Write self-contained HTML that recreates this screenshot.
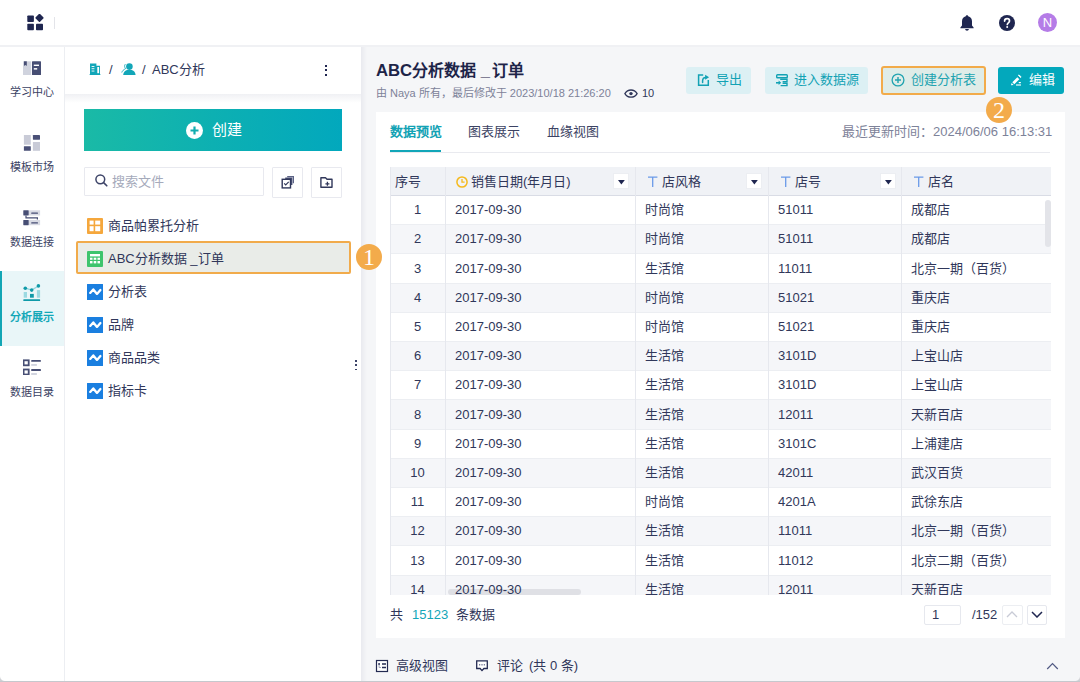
<!DOCTYPE html>
<html lang="zh-CN"><head><meta charset="utf-8">
<style>
*{box-sizing:border-box;margin:0;padding:0}
html,body{width:1080px;height:682px;overflow:hidden}
body{position:relative;background:#fff;font-family:"Liberation Sans",sans-serif;color:#30375a;font-size:13px;line-height:1}
.a{position:absolute}
.t{position:absolute;white-space:nowrap;line-height:16px;z-index:2}
svg{position:absolute;display:block}
/* top bar */
#top{left:0;top:0;width:1080px;height:45px;background:#fff}
#topline{left:0;top:45px;width:1080px;height:2px;background:#f0f1f4;z-index:1}
/* nav */
#nav{left:0;top:46px;width:64px;height:636px;background:#fff}
#navline{left:64px;top:46px;width:1px;height:636px;background:#eceef2}
.nt{position:absolute;left:0;width:64px;text-align:center;font-size:11px;line-height:14px;color:#3b4263;white-space:nowrap}
/* file panel */
#fp{left:65px;top:46px;width:296px;height:636px;background:#fff}
#fph{left:65px;top:46px;width:296px;height:48px;background:#fff}
#fphs{left:65px;top:94px;width:296px;height:9px;background:linear-gradient(to bottom,#f0f1f4,rgba(255,255,255,0))}
/* main */
#main{left:361px;top:46px;width:719px;height:636px;background:#f5f6f8}
#mainsh{left:361px;top:46px;width:6px;height:636px;background:linear-gradient(to right,#e9eaef,#f5f6f8)}
</style></head><body>
<div class="a" id="top"></div>
<div class="a" id="topline"></div>
<div class="a" id="nav"></div>
<div class="a" id="navline"></div>
<div class="a" id="fp"></div>
<div class="a" id="main"></div>
<div class="a" id="mainsh"></div>
<div class="a" id="fph"></div>
<div class="a" id="fphs"></div>

<!-- TOP BAR -->
<svg style="left:27px;top:14px" width="17" height="17" viewBox="0 0 17 17">
<rect x="0.3" y="1.5" width="6.6" height="6.6" rx="0.8" fill="#1f2650"/>
<rect x="9" y="9.8" width="7" height="6.4" rx="0.8" fill="#1f2650"/>
<rect x="0.3" y="9.8" width="6.6" height="6.4" rx="0.8" fill="#1f2650"/>
<rect x="9.4" y="0.8" width="6.2" height="6.2" rx="0.8" fill="#1f2650" transform="rotate(45 12.5 3.9)"/>
</svg>
<div class="a" style="left:54px;top:17px;width:1px;height:12px;background:#e3e4e9"></div>
<svg style="left:959px;top:14px" width="16" height="17" viewBox="0 0 16 17">
<path d="M8 1.2c.7 0 1.2.5 1.2 1.1 2.4.5 3.8 2.5 3.8 5v4.3l1.6 1.8v.9H1.4v-.9L3 11.6V7.3c0-2.5 1.4-4.5 3.8-5C6.8 1.7 7.3 1.2 8 1.2z" fill="#1f2650"/>
<path d="M6.2 15h3.6c0 1-.8 1.7-1.8 1.7S6.2 16 6.2 15z" fill="#1f2650"/>
</svg>
<svg style="left:999px;top:15px" width="16" height="16" viewBox="0 0 16 16">
<circle cx="8" cy="8" r="8" fill="#1f2650"/>
<path d="M5.6 6.1c0-1.5 1.1-2.4 2.5-2.4s2.4.9 2.4 2.2c0 1.9-2.2 1.9-2.2 3.6" stroke="#fff" stroke-width="1.7" fill="none" stroke-linecap="round"/>
<circle cx="8.2" cy="12.1" r="1" fill="#fff"/>
</svg>
<div class="a" style="left:1038px;top:13px;width:19px;height:19px;border-radius:50%;background:#b57ce7;color:#fff;font-size:13px;line-height:19px;text-align:center">N</div>

<!-- NAV -->
<svg style="left:23px;top:61px" width="18" height="14" viewBox="0 0 18 14">
<rect x="0" y="0.3" width="8.2" height="13.7" fill="#d0d3de"/>
<rect x="1" y="0.3" width="2.8" height="4.6" fill="#474e74"/>
<path d="M1 4.9l1.4-1 1.4 1z" fill="#d0d3de"/>
<rect x="9" y="0.3" width="9" height="13.7" rx="0.6" fill="#464d73"/>
<rect x="10.8" y="3.6" width="5.2" height="1.4" fill="#fff"/>
<rect x="10.8" y="7.1" width="3.4" height="1.5" fill="#fff"/>
</svg>
<div class="nt" style="top:85px">学习中心</div>
<svg style="left:23px;top:134px" width="18" height="18" viewBox="0 0 18 18">
<rect x="0.9" y="1" width="6.9" height="9.7" fill="#c9cbd7"/>
<rect x="9.9" y="1" width="7.1" height="4.7" rx="0.4" fill="#4a5077"/>
<rect x="0.9" y="12.2" width="6.9" height="4.6" rx="0.4" fill="#4a5077"/>
<rect x="9.9" y="8" width="7.1" height="8.8" fill="#c9cbd7"/>
</svg>
<div class="nt" style="top:160px">模板市场</div>
<svg style="left:23px;top:209px" width="18" height="18" viewBox="0 0 18 18">
<rect x="5.7" y="1.3" width="11.4" height="5.2" fill="#d9dbe4"/>
<rect x="5.7" y="11" width="11.4" height="5.2" fill="#d9dbe4"/>
<rect x="0.3" y="1.3" width="5.4" height="5.2" rx="0.4" fill="#474e74"/>
<rect x="0.3" y="11" width="5.4" height="5.2" rx="0.4" fill="#474e74"/>
<rect x="8.2" y="3.4" width="6.8" height="1.4" rx="0.5" fill="#474e74"/>
<rect x="8.2" y="13.2" width="6.8" height="1.2" rx="0.5" fill="#474e74"/>
<path d="M3 6.5v2.3h11.4v1.7" stroke="#474e74" stroke-width="1.2" fill="none"/>
</svg>
<div class="nt" style="top:235px">数据连接</div>
<div class="a" style="left:0;top:271px;width:64px;height:75px;background:#e9f6f8"></div>
<div class="a" style="left:0;top:271px;width:2px;height:75px;background:#12a6b5"></div>
<svg style="left:23px;top:284px" width="18" height="18" viewBox="0 0 18 18">
<path d="M2.3 4.2L8.7 6.1 15.4 1.9" stroke="#8fd5de" stroke-width="1.2" fill="none"/>
<circle cx="2.3" cy="4.2" r="1.8" fill="#0f9aa8"/>
<circle cx="8.7" cy="6.1" r="1.8" fill="#0f9aa8"/>
<circle cx="15.4" cy="1.9" r="1.8" fill="#0f9aa8"/>
<rect x="0.7" y="8" width="3.3" height="5.7" fill="#9bdae2"/>
<rect x="7" y="9.9" width="3.8" height="3.8" fill="#0f9aa8"/>
<rect x="13.9" y="6.1" width="3.2" height="7.6" fill="#9bdae2"/>
<rect x="0.3" y="15.3" width="16.8" height="1.7" rx="0.5" fill="#0f9aa8"/>
</svg>
<div class="nt" style="top:309.5px;color:#13a8b8;font-weight:bold">分析展示</div>
<svg style="left:23px;top:359px" width="18" height="16" viewBox="0 0 18 16">
<rect x="0.6" y="1.3" width="5.1" height="5" fill="none" stroke="#474e74" stroke-width="1.8"/>
<rect x="0.6" y="10.5" width="5.1" height="5" fill="none" stroke="#474e74" stroke-width="1.8"/>
<rect x="8.2" y="0.9" width="9.7" height="1.9" rx="0.6" fill="#474e74"/>
<rect x="8.2" y="5.1" width="5.7" height="1.7" fill="#cdd0dc"/>
<rect x="8.2" y="10" width="9.7" height="2" rx="0.6" fill="#474e74"/>
<rect x="8.2" y="14.1" width="5.7" height="1.8" fill="#cdd0dc"/>
</svg>
<div class="nt" style="top:384.5px">数据目录</div>

<!-- FILE PANEL -->
<svg style="left:89px;top:63px" width="12" height="12" viewBox="0 0 12 12">
<path d="M0.3 11.4h11.4v0.6H0.3z M1 0.6h6.4v10.8H1z M7.4 2.8h3.6v8.6H7.4z" fill="#12a6b8"/>
<rect x="2.6" y="3" width="2.8" height="0.9" fill="#fff"/>
<rect x="2.6" y="5.3" width="2.8" height="0.9" fill="#fff"/>
<rect x="2.6" y="7.6" width="2.8" height="0.9" fill="#fff"/>
<rect x="8.3" y="4" width="1.8" height="6.2" fill="#fff"/>
</svg>
<div class="t" style="left:109px;top:62px;font-size:13px;color:#30375a">/</div>
<svg style="left:121px;top:63px" width="15" height="12" viewBox="0 0 15 12">
<circle cx="8.4" cy="3.6" r="3.3" fill="#12a6b8"/>
<path d="M2.2 12c.3-3.6 2.7-5.3 6.2-5.3s5.9 1.7 6.2 5.3z" fill="#12a6b8"/>
<path d="M4.3 1.2C3.2 2.6 3.5 4.3 4.6 5.6 2.6 6.6 1.2 8 0.8 9.5" stroke="#12a6b8" stroke-width="0.9" fill="none"/>
</svg>
<div class="t" style="left:142px;top:62px;font-size:13px;color:#30375a">/</div><div class="t" style="left:152px;top:62px;font-size:13px;color:#30375a">ABC分析</div>
<div class="a" style="left:325px;top:64.5px;width:2px;height:2px;background:#1f2650"></div>
<div class="a" style="left:325px;top:69px;width:2px;height:2px;background:#1f2650"></div>
<div class="a" style="left:325px;top:73.8px;width:2px;height:2px;background:#1f2650"></div>

<div class="a" style="left:84px;top:109px;width:258px;height:42px;background:linear-gradient(90deg,#1abaa6 0%,#0db0b2 50%,#02a8bd 100%)"></div>
<svg style="left:186px;top:122px" width="17" height="17" viewBox="0 0 17 17">
<circle cx="8.5" cy="8.5" r="8.5" fill="#fff"/>
<path d="M8.5 4.5v8M4.5 8.5h8" stroke="#12adb0" stroke-width="2.2"/>
</svg>
<div class="t" style="left:212px;top:122px;font-size:15px;color:#fff;font-weight:500">创建</div>

<div class="a" style="left:84px;top:167px;width:180px;height:29px;border:1px solid #e8e9ef;border-radius:1px;background:#fff"></div>
<svg style="left:95px;top:174px" width="13" height="13" viewBox="0 0 13 13">
<circle cx="5.3" cy="5.3" r="4.4" stroke="#3d4468" stroke-width="1.5" fill="none"/>
<path d="M8.6 8.6l3.2 3.2" stroke="#3d4468" stroke-width="1.6" stroke-linecap="round"/>
</svg>
<div class="t" style="left:112px;top:174px;font-size:13px;color:#a5aabb">搜索文件</div>
<div class="a" style="left:272px;top:167px;width:31px;height:31px;border:1px solid #e8e9ef;border-radius:1px;background:#fff"></div>
<svg style="left:280px;top:175px" width="15" height="14" viewBox="0 0 15 14">
<path d="M7.2 1.7h6.2v6.6" stroke="#5b6285" stroke-width="1.2" fill="none"/>
<path d="M5.2 3.3h6.5v6.8" stroke="#474e74" stroke-width="1.4" fill="none"/>
<rect x="2.2" y="4.3" width="8.3" height="8.6" stroke="#30375a" stroke-width="1.4" fill="#fff"/>
<path d="M4.2 8.4l1.5 1.5 3-3" stroke="#30375a" stroke-width="1.2" fill="none"/>
</svg>
<div class="a" style="left:311px;top:167px;width:31px;height:31px;border:1px solid #e8e9ef;border-radius:1px;background:#fff"></div>
<svg style="left:320px;top:177px" width="13" height="11" viewBox="0 0 13 11">
<path d="M0.9 0.8h4.6l1.5 1.5h5v7.9H0.9z" stroke="#30375a" stroke-width="1.4" fill="none" stroke-linejoin="round"/>
<path d="M7.4 4.8v4M5.4 6.8h4" stroke="#30375a" stroke-width="1.3"/>
</svg>

<!-- FILE LIST -->
<svg style="left:87px;top:218px" width="16" height="16" viewBox="0 0 16 16">
<rect x="0" y="0" width="16" height="16" rx="1" fill="#f5a73c"/>
<rect x="2.6" y="2.6" width="4" height="4" fill="#fff"/>
<rect x="8.2" y="2.6" width="5" height="4" fill="#fff"/>
<rect x="2.6" y="8.2" width="4" height="5" fill="#fff"/>
<rect x="8.2" y="8.2" width="5" height="5" fill="#fff"/>
</svg>
<div class="t" style="left:108px;top:218px;font-size:13px;color:#30375a">商品帕累托分析</div>

<div class="a" style="left:76px;top:241px;width:275px;height:33px;border:2px solid #f1ab4b;border-radius:2px;background:#e9ece8"></div>
<svg style="left:87px;top:251px" width="16" height="16" viewBox="0 0 16 16">
<rect x="0" y="0" width="16" height="16" rx="1" fill="#3ec46d"/>
<rect x="3" y="3" width="10" height="2.4" fill="#fff"/>
<rect x="3" y="6.7" width="2.5" height="2.1" fill="#fff"/>
<rect x="6.7" y="6.7" width="2.6" height="2.1" fill="#fff"/>
<rect x="10.5" y="6.7" width="2.5" height="2.1" fill="#fff"/>
<rect x="3" y="10" width="2.5" height="2.4" fill="#fff"/>
<rect x="6.7" y="10" width="2.6" height="2.4" fill="#fff"/>
<rect x="10.5" y="10" width="2.5" height="2.4" fill="#fff"/>
</svg>
<div class="t" style="left:108px;top:251px;font-size:13px;color:#30375a">ABC分析数据 _订单</div>
<svg style="left:87px;top:284px" width="16" height="16" viewBox="0 0 16 16">
<rect x="0" y="0" width="16" height="16" rx="0.3" fill="#1a7fe0"/>
<path d="M3.2 8.9L6.3 5.4 10 9.9 13.4 6" stroke="#fff" stroke-width="2.3" fill="none" stroke-linejoin="round" stroke-linecap="round"/>
</svg>
<div class="t" style="left:108px;top:284px;font-size:13px;color:#30375a">分析表</div>
<svg style="left:87px;top:317px" width="16" height="16" viewBox="0 0 16 16">
<rect x="0" y="0" width="16" height="16" rx="0.3" fill="#1a7fe0"/>
<path d="M3.2 8.9L6.3 5.4 10 9.9 13.4 6" stroke="#fff" stroke-width="2.3" fill="none" stroke-linejoin="round" stroke-linecap="round"/>
</svg>
<div class="t" style="left:108px;top:317px;font-size:13px;color:#30375a">品牌</div>
<svg style="left:87px;top:350px" width="16" height="16" viewBox="0 0 16 16">
<rect x="0" y="0" width="16" height="16" rx="0.3" fill="#1a7fe0"/>
<path d="M3.2 8.9L6.3 5.4 10 9.9 13.4 6" stroke="#fff" stroke-width="2.3" fill="none" stroke-linejoin="round" stroke-linecap="round"/>
</svg>
<div class="t" style="left:108px;top:350px;font-size:13px;color:#30375a">商品品类</div>
<svg style="left:87px;top:383px" width="16" height="16" viewBox="0 0 16 16">
<rect x="0" y="0" width="16" height="16" rx="0.3" fill="#1a7fe0"/>
<path d="M3.2 8.9L6.3 5.4 10 9.9 13.4 6" stroke="#fff" stroke-width="2.3" fill="none" stroke-linejoin="round" stroke-linecap="round"/>
</svg>
<div class="t" style="left:108px;top:383px;font-size:13px;color:#30375a">指标卡</div>

<div class="a" style="left:355px;top:360px;width:1.6px;height:1.6px;background:#3d4468"></div>
<div class="a" style="left:355px;top:364.4px;width:1.6px;height:1.6px;background:#3d4468"></div>
<div class="a" style="left:355px;top:368.8px;width:1.6px;height:1.6px;background:#3d4468"></div>
<div class="a" style="left:356px;top:244px;width:26px;height:26px;border-radius:50%;background:#f3ab4b;color:#fff;font-family:'Liberation Serif',serif;font-size:24px;z-index:5;line-height:26px;text-align:center">1</div>

<!-- MAIN HEADER -->
<div class="t" style="left:376px;top:61px;font-size:16.7px;line-height:20px;font-weight:bold;color:#1d2448">ABC<span style="font-size:16px">分析数据</span> _<span style="font-size:16px;margin-left:2px">订单</span></div>
<div class="t" style="left:376px;top:86.5px;font-size:11px;line-height:13px;color:#7d8299">由 Naya 所有，最后修改于 2023/10/18 21:26:20</div>
<svg style="left:624px;top:89px" width="14" height="9" viewBox="0 0 14 9">
<path d="M0.9 4.6C2.4 2.1 4.5 1 7 1s4.6 1.1 6.1 3.6C11.6 7.1 9.5 8.2 7 8.2S2.4 7.1 0.9 4.6z" stroke="#30375a" stroke-width="1.3" fill="none"/>
<circle cx="7" cy="4.6" r="1.7" fill="#30375a"/>
</svg>
<div class="t" style="left:642px;top:87px;font-size:11px;line-height:13px;color:#30375a">10</div>

<div class="a" style="left:686px;top:67px;width:65px;height:27px;border-radius:3px;background:#dcf0f4"></div>
<svg style="left:697px;top:73px" width="13" height="13" viewBox="0 0 13 13">
<path d="M6.2 1.9H1.6v10.3h9.7V7" stroke="#12a2b4" stroke-width="1.5" fill="none"/>
<path d="M5.6 9.5V8c0-2 1.2-3.5 3.2-3.5" stroke="#12a2b4" stroke-width="1.5" fill="none" stroke-linecap="round"/>
<path d="M8.1 1.8l4 2.5-4 2.5z" fill="#12a2b4"/>
</svg>
<div class="t" style="left:716px;top:72px;font-size:13px;color:#12a2b4">导出</div>

<div class="a" style="left:765px;top:67px;width:103px;height:27px;border-radius:3px;background:#dcf0f4"></div>
<svg style="left:775px;top:73px" width="14" height="14" viewBox="0 0 14 14">
<rect x="1.7" y="1.8" width="10.6" height="3" rx="0.8" stroke="#12a2b4" stroke-width="1.4" fill="none"/>
<path d="M5.2 6.3h6.8v2.4H7.6M7.6 10.4h4.4v2.2H5.6" stroke="#12a2b4" stroke-width="1.4" fill="none"/>
<path d="M1 9.8h3.5" stroke="#12a2b4" stroke-width="1.6"/>
<path d="M3.6 7.6l2.6 2.2-2.6 2.2z" fill="#12a2b4"/>
</svg>
<div class="t" style="left:794px;top:72px;font-size:13px;color:#12a2b4">进入数据源</div>

<div class="a" style="left:881px;top:66px;width:105px;height:29px;border:2px solid #f2ab4a;border-radius:3px;background:#dfece8"></div>
<svg style="left:891px;top:73px" width="14" height="14" viewBox="0 0 14 14">
<circle cx="7" cy="7" r="5.9" stroke="#21a3b0" stroke-width="1.3" fill="none"/>
<path d="M7 4v6M4 7h6" stroke="#21a3b0" stroke-width="1.4"/>
</svg>
<div class="t" style="left:911px;top:72px;font-size:13px;color:#21a3b0">创建分析表</div>

<div class="a" style="left:998px;top:67px;width:66px;height:27px;border-radius:3px;background:#03a8bc"></div>
<svg style="left:1010px;top:74px" width="12" height="12" viewBox="0 0 12 12">
<path d="M2.3 8.3L7.3 3.3 9.3 5.3 4.3 10.3z" fill="#fff"/>
<path d="M1 11.3L1.6 9 3.6 11z" fill="#fff"/>
<path d="M8.4 1.4l0.6-0.6 2.2 2.2-0.6 0.6z" fill="#fff" stroke="#fff" stroke-width="0.8"/>
<rect x="8.6" y="8" width="2.4" height="1.2" rx="0.6" fill="#fff"/>
<rect x="6" y="10.3" width="5" height="1.4" fill="#fff" opacity="0.8"/>
</svg>
<div class="t" style="left:1029px;top:72px;font-size:13px;color:#fff;font-weight:500">编辑</div>

<!-- CARD -->
<div class="a" style="left:376px;top:112px;width:689px;height:526px;background:#fff"></div>

<!-- TABS -->
<div class="t" style="left:390px;top:124px;font-size:13px;font-weight:bold;color:#12a2b4">数据预览</div>
<div class="t" style="left:468px;top:124px;font-size:13px;color:#3b4263">图表展示</div>
<div class="t" style="left:547px;top:124px;font-size:13px;color:#3b4263">血缘视图</div>
<div class="a" style="left:390px;top:152px;width:660px;height:1px;background:#e9eaef"></div>
<div class="a" style="left:390px;top:150px;width:51px;height:2px;background:#12a6b8"></div>
<div class="t" style="left:842px;top:124px;font-size:13px;color:#7d8299">最近更新时间：2024/06/06 16:13:31</div>

<!-- TABLE -->
<div class="a" style="left:390px;top:167px;width:661px;height:428px;overflow:hidden">
<div class="a" style="left:0;top:0;width:661px;height:28px;background:#f0f2f6"></div>
<div class="a" style="left:0;top:28px;width:661px;height:1px;background:#d9dce5"></div>
<div class="a" style="left:0;top:29.0px;width:661px;height:29.2px;background:#fff"></div><div class="a" style="left:0;top:57.2px;width:661px;height:1px;background:#eceef2"></div><div class="t" style="left:0;width:55px;text-align:center;top:35.1px">1</div><div class="t" style="left:65px;top:35.1px">2017-09-30</div><div class="t" style="left:255px;top:35.1px">时尚馆</div><div class="t" style="left:388px;top:35.1px">51011</div><div class="t" style="left:521px;top:35.1px">成都店</div>
<div class="a" style="left:0;top:58.2px;width:661px;height:29.2px;background:#f5f6f9"></div><div class="a" style="left:0;top:86.4px;width:661px;height:1px;background:#eceef2"></div><div class="t" style="left:0;width:55px;text-align:center;top:64.3px">2</div><div class="t" style="left:65px;top:64.3px">2017-09-30</div><div class="t" style="left:255px;top:64.3px">时尚馆</div><div class="t" style="left:388px;top:64.3px">51011</div><div class="t" style="left:521px;top:64.3px">成都店</div>
<div class="a" style="left:0;top:87.4px;width:661px;height:29.2px;background:#fff"></div><div class="a" style="left:0;top:115.6px;width:661px;height:1px;background:#eceef2"></div><div class="t" style="left:0;width:55px;text-align:center;top:93.5px">3</div><div class="t" style="left:65px;top:93.5px">2017-09-30</div><div class="t" style="left:255px;top:93.5px">生活馆</div><div class="t" style="left:388px;top:93.5px">11011</div><div class="t" style="left:521px;top:93.5px">北京一期（百货）</div>
<div class="a" style="left:0;top:116.6px;width:661px;height:29.2px;background:#f5f6f9"></div><div class="a" style="left:0;top:144.8px;width:661px;height:1px;background:#eceef2"></div><div class="t" style="left:0;width:55px;text-align:center;top:122.7px">4</div><div class="t" style="left:65px;top:122.7px">2017-09-30</div><div class="t" style="left:255px;top:122.7px">时尚馆</div><div class="t" style="left:388px;top:122.7px">51021</div><div class="t" style="left:521px;top:122.7px">重庆店</div>
<div class="a" style="left:0;top:145.8px;width:661px;height:29.2px;background:#fff"></div><div class="a" style="left:0;top:174.0px;width:661px;height:1px;background:#eceef2"></div><div class="t" style="left:0;width:55px;text-align:center;top:151.9px">5</div><div class="t" style="left:65px;top:151.9px">2017-09-30</div><div class="t" style="left:255px;top:151.9px">时尚馆</div><div class="t" style="left:388px;top:151.9px">51021</div><div class="t" style="left:521px;top:151.9px">重庆店</div>
<div class="a" style="left:0;top:175.0px;width:661px;height:29.2px;background:#f5f6f9"></div><div class="a" style="left:0;top:203.2px;width:661px;height:1px;background:#eceef2"></div><div class="t" style="left:0;width:55px;text-align:center;top:181.1px">6</div><div class="t" style="left:65px;top:181.1px">2017-09-30</div><div class="t" style="left:255px;top:181.1px">生活馆</div><div class="t" style="left:388px;top:181.1px">3101D</div><div class="t" style="left:521px;top:181.1px">上宝山店</div>
<div class="a" style="left:0;top:204.2px;width:661px;height:29.2px;background:#fff"></div><div class="a" style="left:0;top:232.4px;width:661px;height:1px;background:#eceef2"></div><div class="t" style="left:0;width:55px;text-align:center;top:210.3px">7</div><div class="t" style="left:65px;top:210.3px">2017-09-30</div><div class="t" style="left:255px;top:210.3px">生活馆</div><div class="t" style="left:388px;top:210.3px">3101D</div><div class="t" style="left:521px;top:210.3px">上宝山店</div>
<div class="a" style="left:0;top:233.4px;width:661px;height:29.2px;background:#f5f6f9"></div><div class="a" style="left:0;top:261.6px;width:661px;height:1px;background:#eceef2"></div><div class="t" style="left:0;width:55px;text-align:center;top:239.5px">8</div><div class="t" style="left:65px;top:239.5px">2017-09-30</div><div class="t" style="left:255px;top:239.5px">生活馆</div><div class="t" style="left:388px;top:239.5px">12011</div><div class="t" style="left:521px;top:239.5px">天新百店</div>
<div class="a" style="left:0;top:262.6px;width:661px;height:29.2px;background:#fff"></div><div class="a" style="left:0;top:290.8px;width:661px;height:1px;background:#eceef2"></div><div class="t" style="left:0;width:55px;text-align:center;top:268.7px">9</div><div class="t" style="left:65px;top:268.7px">2017-09-30</div><div class="t" style="left:255px;top:268.7px">生活馆</div><div class="t" style="left:388px;top:268.7px">3101C</div><div class="t" style="left:521px;top:268.7px">上浦建店</div>
<div class="a" style="left:0;top:291.8px;width:661px;height:29.2px;background:#f5f6f9"></div><div class="a" style="left:0;top:320.0px;width:661px;height:1px;background:#eceef2"></div><div class="t" style="left:0;width:55px;text-align:center;top:297.9px">10</div><div class="t" style="left:65px;top:297.9px">2017-09-30</div><div class="t" style="left:255px;top:297.9px">生活馆</div><div class="t" style="left:388px;top:297.9px">42011</div><div class="t" style="left:521px;top:297.9px">武汉百货</div>
<div class="a" style="left:0;top:321.0px;width:661px;height:29.2px;background:#fff"></div><div class="a" style="left:0;top:349.2px;width:661px;height:1px;background:#eceef2"></div><div class="t" style="left:0;width:55px;text-align:center;top:327.1px">11</div><div class="t" style="left:65px;top:327.1px">2017-09-30</div><div class="t" style="left:255px;top:327.1px">时尚馆</div><div class="t" style="left:388px;top:327.1px">4201A</div><div class="t" style="left:521px;top:327.1px">武徐东店</div>
<div class="a" style="left:0;top:350.2px;width:661px;height:29.2px;background:#f5f6f9"></div><div class="a" style="left:0;top:378.4px;width:661px;height:1px;background:#eceef2"></div><div class="t" style="left:0;width:55px;text-align:center;top:356.3px">12</div><div class="t" style="left:65px;top:356.3px">2017-09-30</div><div class="t" style="left:255px;top:356.3px">生活馆</div><div class="t" style="left:388px;top:356.3px">11011</div><div class="t" style="left:521px;top:356.3px">北京一期（百货）</div>
<div class="a" style="left:0;top:379.4px;width:661px;height:29.2px;background:#fff"></div><div class="a" style="left:0;top:407.6px;width:661px;height:1px;background:#eceef2"></div><div class="t" style="left:0;width:55px;text-align:center;top:385.5px">13</div><div class="t" style="left:65px;top:385.5px">2017-09-30</div><div class="t" style="left:255px;top:385.5px">生活馆</div><div class="t" style="left:388px;top:385.5px">11012</div><div class="t" style="left:521px;top:385.5px">北京二期（百货）</div>
<div class="a" style="left:0;top:408.6px;width:661px;height:29.2px;background:#f5f6f9"></div><div class="a" style="left:0;top:436.8px;width:661px;height:1px;background:#eceef2"></div><div class="t" style="left:0;width:55px;text-align:center;top:414.7px">14</div><div class="t" style="left:65px;top:414.7px">2017-09-30</div><div class="t" style="left:255px;top:414.7px">生活馆</div><div class="t" style="left:388px;top:414.7px">12011</div><div class="t" style="left:521px;top:414.7px">天新百店</div>
<div class="a" style="left:0px;top:0;width:1px;height:428px;background:#e6e8ee"></div><div class="a" style="left:55px;top:0;width:1px;height:428px;background:#e6e8ee"></div><div class="a" style="left:245px;top:0;width:1px;height:428px;background:#e6e8ee"></div><div class="a" style="left:378px;top:0;width:1px;height:428px;background:#e6e8ee"></div><div class="a" style="left:511px;top:0;width:1px;height:428px;background:#e6e8ee"></div>
<div class="t" style="left:5px;top:6.7px">序号</div>
<svg style="left:66px;top:9px" width="12" height="12" viewBox="0 0 12 12"><circle cx="6" cy="6" r="5.1" stroke="#f5b91c" stroke-width="1.5" fill="none"/><path d="M6 3v3.2h2.6" stroke="#f5b91c" stroke-width="1.3" fill="none"/></svg>
<div class="t" style="left:81px;top:6.7px">销售日期(年月日)</div>
<svg style="left:258px;top:9px" width="10" height="12" viewBox="0 0 10 12"><path d="M0 1.1h9.4M4.7 1.1V11" stroke="#6a9ae8" stroke-width="1.3"/></svg>
<div class="t" style="left:272px;top:6.7px">店风格</div>
<svg style="left:391px;top:9px" width="10" height="12" viewBox="0 0 10 12"><path d="M0 1.1h9.4M4.7 1.1V11" stroke="#6a9ae8" stroke-width="1.3"/></svg>
<div class="t" style="left:405px;top:6.7px">店号</div>
<svg style="left:524px;top:9px" width="10" height="12" viewBox="0 0 10 12"><path d="M0 1.1h9.4M4.7 1.1V11" stroke="#6a9ae8" stroke-width="1.3"/></svg>
<div class="t" style="left:538px;top:6.7px">店名</div>
<div class="a" style="left:223px;top:6px;width:16px;height:16px;background:#fff;border:1px solid #eceef2"><svg style="left:4.2px;top:5.5px" width="7" height="5" viewBox="0 0 7 5"><path d="M0 0h6.8L3.4 4.6z" fill="#1f2650"/></svg></div><div class="a" style="left:356px;top:6px;width:16px;height:16px;background:#fff;border:1px solid #eceef2"><svg style="left:4.2px;top:5.5px" width="7" height="5" viewBox="0 0 7 5"><path d="M0 0h6.8L3.4 4.6z" fill="#1f2650"/></svg></div><div class="a" style="left:490px;top:6px;width:16px;height:16px;background:#fff;border:1px solid #eceef2"><svg style="left:4.2px;top:5.5px" width="7" height="5" viewBox="0 0 7 5"><path d="M0 0h6.8L3.4 4.6z" fill="#1f2650"/></svg></div>
<div class="a" style="left:655px;top:33px;width:6px;height:47px;border-radius:3px;background:#e3e4e9"></div>
<div class="a" style="left:58px;top:422px;width:133px;height:6px;border-radius:3px;background:#dfe0e5"></div>
</div>
<!-- FOOTER -->
<div class="t" style="left:390px;top:607px">共</div>
<div class="t" style="left:412px;top:607px;color:#12a6b8">15123</div>
<div class="t" style="left:456px;top:607px">条数据</div>
<div class="a" style="left:924px;top:605px;width:37px;height:20px;border:1px solid #e6e8ee;border-radius:2px;background:#fff"></div>
<div class="t" style="left:932px;top:607px">1</div>
<div class="t" style="left:972px;top:607px">/152</div>
<div class="a" style="left:1002px;top:605px;width:21px;height:20px;border:1px solid #eceef2;border-radius:2px;background:#fff"></div>
<svg style="left:1006px;top:611px" width="12" height="7" viewBox="0 0 12 7"><path d="M1 6l5-5 5 5" stroke="#c8cbd6" stroke-width="1.3" fill="none"/></svg>
<div class="a" style="left:1027px;top:605px;width:20px;height:20px;border:1px solid #e6e8ee;border-radius:2px;background:#fff"></div>
<svg style="left:1031px;top:611px" width="12" height="7" viewBox="0 0 12 7"><path d="M1 1l5 5 5-5" stroke="#1f2650" stroke-width="1.5" fill="none"/></svg>

<!-- BOTTOM BAR -->
<svg style="left:375px;top:659px" width="14" height="14" viewBox="0 0 14 14">
<rect x="1.5" y="1.5" width="11" height="11" stroke="#232a52" stroke-width="1.2" fill="#fff"/>
<rect x="3.2" y="4.2" width="1.8" height="1.6" fill="#232a52"/>
<path d="M7 5h4M7 8.5h4" stroke="#232a52" stroke-width="1.3"/>
<path d="M4.1 5.8v2.7H6" stroke="#8a8fa8" stroke-width="0.8" fill="none"/>
</svg>
<div class="t" style="left:396px;top:658px">高级视图</div>
<svg style="left:475px;top:659px" width="14" height="14" viewBox="0 0 14 14">
<path d="M1.7 1.9h10.6v7.6H8.9L7 11.6 5.1 9.5H1.7z" stroke="#232a52" stroke-width="1.3" fill="#fff" stroke-linejoin="miter"/>
<path d="M4.2 5.8h1M6.5 5.8h1M8.8 5.8h1" stroke="#5b6285" stroke-width="1.4"/>
</svg>
<div class="t" style="left:497px;top:658px">评论</div><div class="t" style="left:529px;top:658px">(共 0 条)</div>
<svg style="left:1046px;top:662px" width="13" height="8" viewBox="0 0 13 8"><path d="M1.2 7l5.3-5.3L11.8 7" stroke="#4f5882" stroke-width="1.2" fill="none"/></svg>
<div class="a" style="left:0;top:681px;width:1080px;height:1px;background:#c6c8cd;z-index:6"></div>
<div class="a" style="left:0;top:676px;width:5px;height:5px;background:radial-gradient(circle at 100% 0,rgba(0,0,0,0) 4.5px,#cfd1d5 5.5px);z-index:6"></div>
<div class="a" style="left:1075px;top:676px;width:5px;height:5px;background:radial-gradient(circle at 0 0,rgba(0,0,0,0) 4.5px,#cfd1d5 5.5px);z-index:6"></div>

<div class="a" style="left:986px;top:97px;width:26px;height:26px;border-radius:50%;background:#f3ab4b;color:#fff;font-family:'Liberation Serif',serif;font-size:24px;z-index:5;line-height:26px;text-align:center">2</div>
</body></html>
